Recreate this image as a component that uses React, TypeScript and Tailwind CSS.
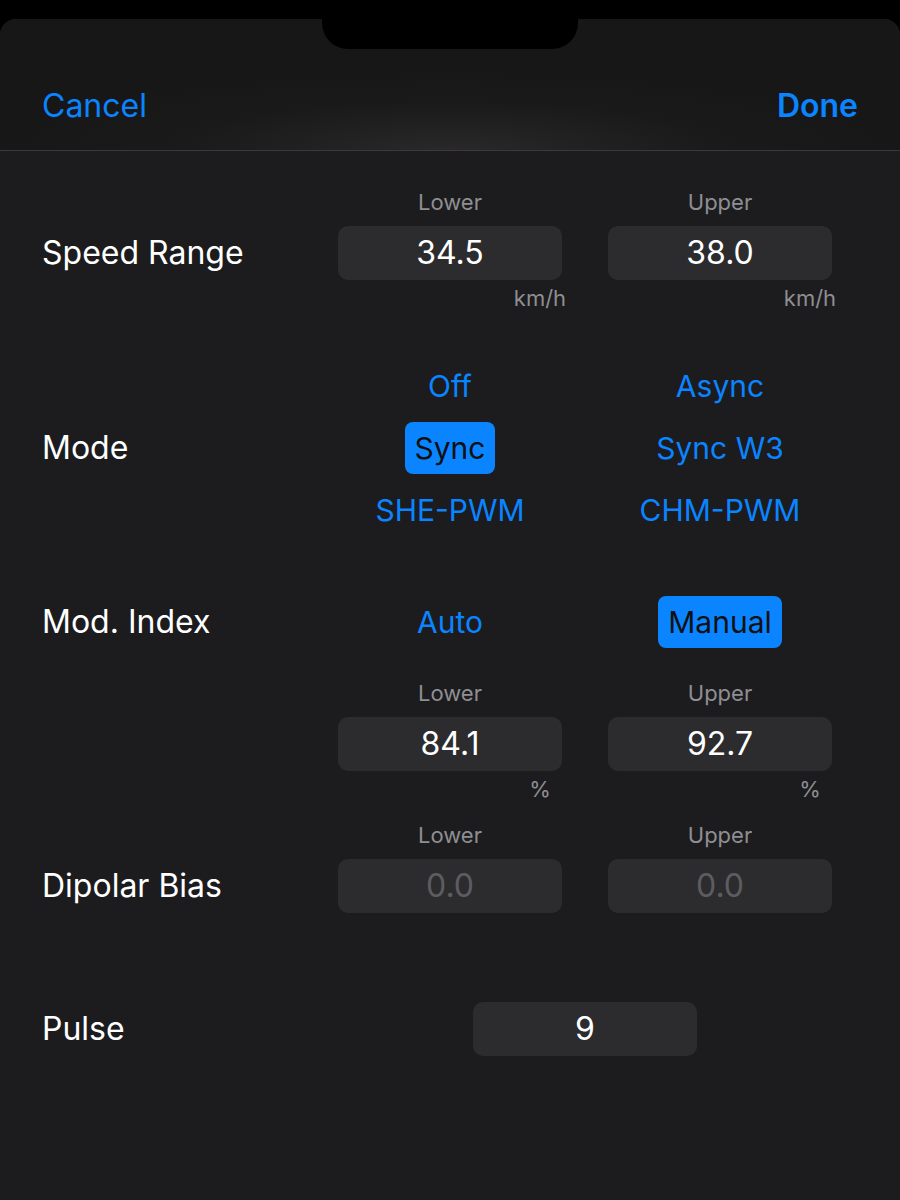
import { FC, ReactNode } from "react";

const font = { fontFamily: "Inter, 'Noto Sans', sans-serif" };

const RowLabel: FC<{ children: ReactNode }> = ({ children }) => (
  <div className="w-[296px] shrink-0 text-[32px] leading-[40px] text-white">
    {children}
  </div>
);

const SubLabel: FC<{ children: ReactNode }> = ({ children }) => (
  <div className="h-[28px] text-center text-[22px] leading-[28px] text-[#8e8e93]">
    {children}
  </div>
);

const Field: FC<{ value: string; disabled?: boolean; wide?: boolean }> = ({
  value,
  disabled,
  wide,
}) => (
  <div
    className={`flex h-[54px] items-center justify-center rounded-[10px] bg-[#2c2c2e] text-[32px] ${
      disabled ? "text-[#5d5d61]" : "text-white"
    } ${wide ? "w-[224px]" : "w-full"}`}
  >
    {value}
  </div>
);

const Unit: FC<{ children: ReactNode }> = ({ children }) => (
  <div className="flex h-[28px] w-full justify-end">
    <span className="-mr-[8px] w-[60px] text-center text-[22px] leading-[28px] text-[#8e8e93]">
      {children}
    </span>
  </div>
);

const Option: FC<{ label: string; active?: boolean }> = ({ label, active }) => (
  <div className="flex h-[52px] items-center justify-center">
    <span
      className={`rounded-[8px] px-[10px] text-[30px] leading-[52px] ${
        active ? "bg-[#0a84ff] text-[#111]" : "text-[#0a84ff]"
      }`}
    >
      {label}
    </span>
  </div>
);

const RangeCol: FC<{ title: string; value: string; unit?: string; disabled?: boolean }> = ({
  title,
  value,
  unit,
  disabled,
}) => (
  <div className="flex w-[224px] flex-col">
    <SubLabel>{title}</SubLabel>
    <div className="mt-[10px]">
      <Field value={value} disabled={disabled} />
    </div>
    {unit && (
      <div className="mt-[4px]">
        <Unit>{unit}</Unit>
      </div>
    )}
  </div>
);

export default function App() {
  return (
    <div className="h-[1200px] w-[900px] bg-black pt-[19px]" style={font}>
      <div className="relative h-[1181px] overflow-hidden rounded-t-[16px] bg-[#1c1c1e]">
        {/* notch */}
        <div className="absolute left-[322px] top-[-19px] h-[49px] w-[256px] rounded-b-[26px] bg-black" />

        <header className="flex h-[132px] items-start justify-between border-b border-[#3a3a3c] bg-[radial-gradient(ellipse_50%_60%_at_50%_100%,#2a2828_0%,#1a1a1a_60%,#171717_100%)] px-[42px] pt-[67px]">
          <span className="text-[32px] leading-[40px] text-[#0a84ff]">Cancel</span>
          <span className="text-[32px] font-semibold leading-[40px] text-[#0a84ff]">Done</span>
        </header>

        <div className="flex flex-col pl-[42px] pt-[37px]">
          {/* Speed Range */}
          <div className="flex">
            <div className="flex h-[92px] w-[296px] shrink-0 items-center pt-[38px]">
              <RowLabel>Speed Range</RowLabel>
            </div>
            <div className="flex gap-[46px]">
              <RangeCol title="Lower" value="34.5" unit="km/h" />
              <RangeCol title="Upper" value="38.0" unit="km/h" />
            </div>
          </div>

          {/* Mode */}
          <div className="mt-[48px] flex items-center">
            <RowLabel>Mode</RowLabel>
            <div className="grid grid-cols-[224px_224px] gap-x-[46px] gap-y-[10px]">
              <Option label="Off" />
              <Option label="Async" />
              <Option label="Sync" active />
              <Option label="Sync W3" />
              <Option label="SHE-PWM" />
              <Option label="CHM-PWM" />
            </div>
          </div>

          {/* Mod. Index */}
          <div className="mt-[60px] flex items-center">
            <RowLabel>Mod. Index</RowLabel>
            <div className="grid grid-cols-[224px_224px] gap-x-[46px]">
              <Option label="Auto" />
              <Option label="Manual" active />
            </div>
          </div>
          <div className="mt-[31px] flex">
            <div className="w-[296px] shrink-0" />
            <div className="flex gap-[46px]">
              <RangeCol title="Lower" value="84.1" unit="%" />
              <RangeCol title="Upper" value="92.7" unit="%" />
            </div>
          </div>

          {/* Dipolar Bias */}
          <div className="mt-[18px] flex">
            <div className="flex h-[92px] w-[296px] shrink-0 items-center pt-[38px]">
              <RowLabel>Dipolar Bias</RowLabel>
            </div>
            <div className="flex gap-[46px]">
              <RangeCol title="Lower" value="0.0" disabled />
              <RangeCol title="Upper" value="0.0" disabled />
            </div>
          </div>

          {/* Pulse */}
          <div className="mt-[89px] flex items-center">
            <RowLabel>Pulse</RowLabel>
            <div className="flex w-[494px] justify-center">
              <Field value="9" wide />
            </div>
          </div>
        </div>
      </div>
    </div>
  );
}
